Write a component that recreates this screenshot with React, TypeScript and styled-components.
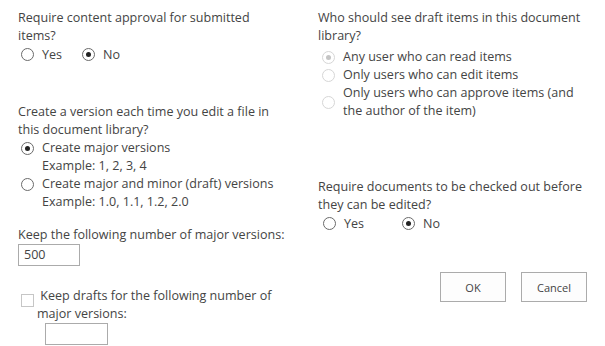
import React from "react";
import styled, { createGlobalStyle } from "styled-components";

const GlobalStyle = createGlobalStyle`
  html, body {
    margin: 0;
    padding: 0;
    background: #ffffff;
  }
  body {
    font-family: "Open Sans", "Noto Sans", "Liberation Sans", sans-serif;
    font-size: 12.55px;
    color: #444444;
  }
`;

const Page = styled.div`
  width: 605px;
  height: 346px;
  box-sizing: border-box;
  padding: 9px 18px 0 18px;
  display: grid;
  grid-template-columns: 300px 1fr;
  overflow: hidden;
`;

const Column = styled.div`
  display: flex;
  flex-direction: column;
`;

const Section = styled.div<{ $top?: number }>`
  display: flex;
  flex-direction: column;
  margin-top: ${(p) => p.$top ?? 0}px;
`;

const Label = styled.div`
  line-height: 18px;
  white-space: nowrap;
`;

const RadioRow = styled.div<{ $gap: number; $indent: number }>`
  display: flex;
  align-items: center;
  gap: ${(p) => p.$gap}px;
  height: 19px;
  padding-left: ${(p) => p.$indent}px;
`;

const Option = styled.label<{ $center?: boolean }>`
  display: flex;
  align-items: ${(p) => (p.$center ? "center" : "flex-start")};
  gap: 8px;
  line-height: 18px;
  white-space: nowrap;
`;

const OptionList = styled.div<{ $indent: number; $top?: number }>`
  display: flex;
  flex-direction: column;
  padding-left: ${(p) => p.$indent}px;
  margin-top: ${(p) => p.$top ?? 0}px;
`;

const Circle = styled.span<{ $checked?: boolean; $disabled?: boolean; $center?: boolean }>`
  position: relative;
  flex: none;
  width: 11px;
  height: 11px;
  margin-top: ${(p) => (p.$center ? 0 : 3)}px;
  border-radius: 50%;
  border: 1px solid ${(p) => (p.$disabled ? "#d6d6d6" : "#6a6a6a")};
  background: #fff;
  &::after {
    content: "";
    display: ${(p) => (p.$checked ? "block" : "none")};
    position: absolute;
    left: 3px;
    top: 3px;
    width: 5px;
    height: 5px;
    border-radius: 50%;
    background: ${(p) => (p.$disabled ? "#c4c4c4" : "#222")};
  }
`;

const OptionText = styled.div`
  display: flex;
  flex-direction: column;
`;

const TextBox = styled.div<{ $width: number; $left?: number }>`
  box-sizing: border-box;
  width: ${(p) => p.$width}px;
  height: 22px;
  margin-left: ${(p) => p.$left ?? 0}px;
  border: 1px solid #ababab;
  padding: 0 5px;
  line-height: 20px;
  background: #fff;
`;

const CheckRow = styled.div`
  display: grid;
  grid-template-columns: 16px 1fr;
  margin-top: 21px;
  padding-left: 3px;
`;

const Checkbox = styled.span`
  box-sizing: border-box;
  width: 13px;
  height: 13px;
  border: 1px solid #c6c6c6;
  background: #fff;
  margin-top: 7px;
`;

const Buttons = styled.div`
  display: flex;
  justify-content: flex-end;
  gap: 15px;
  margin-top: 39px;
`;

const Button = styled.button`
  box-sizing: border-box;
  width: 66px;
  height: 30px;
  border: 1px solid #ababab;
  background: #fdfdfd;
  font: inherit;
  color: #444444;
  font-size: 11px;
`;

const Radio = ({
  label,
  checked,
  disabled,
  center,
}: {
  label: React.ReactNode;
  checked?: boolean;
  disabled?: boolean;
  center?: boolean;
}) => (
  <Option $center={center}>
    <Circle $checked={checked} $disabled={disabled} $center={center} />
    <OptionText>{label}</OptionText>
  </Option>
);

export default function App() {
  return (
    <>
      <GlobalStyle />
      <Page>
        <Column>
          <Section>
            <Label>
              Require content approval for submitted
              <br />
              items?
            </Label>
            <RadioRow $gap={20} $indent={3}>
              <Radio center label="Yes" />
              <Radio center label="No" checked />
            </RadioRow>
          </Section>

          <Section $top={39}>
            <Label>
              Create a version each time you edit a file in
              <br />
              this document library?
            </Label>
            <OptionList $indent={3}>
              <Radio
                checked
                label={
                  <>
                    <span>Create major versions</span>
                    <span>Example: 1, 2, 3, 4</span>
                  </>
                }
              />
              <Radio
                label={
                  <>
                    <span>Create major and minor (draft) versions</span>
                    <span>Example: 1.0, 1.1, 1.2, 2.0</span>
                  </>
                }
              />
            </OptionList>
          </Section>

          <Section $top={15}>
            <Label>Keep the following number of major versions:</Label>
            <TextBox $width={62}>500</TextBox>
          </Section>

          <CheckRow>
            <Checkbox />
            <Section>
              <Label>
                &nbsp;Keep drafts for the following number of
                <br />
                major versions:
              </Label>
              <TextBox $width={63} $left={8} />
            </Section>
          </CheckRow>
        </Column>

        <Column>
          <Section>
            <Label>
              Who should see draft items in this document
              <br />
              library?
            </Label>
            <OptionList $indent={4} $top={3}>
              <Radio center label="Any user who can read items" checked disabled />
              <Radio center label="Only users who can edit items" disabled />
              <Radio
                center
                disabled
                label={
                  <>
                    <span>Only users who can approve items (and</span>
                    <span>the author of the item)</span>
                  </>
                }
              />
            </OptionList>
          </Section>

          <Section $top={58}>
            <Label>
              Require documents to be checked out before
              <br />
              they can be edited?
            </Label>
            <RadioRow $gap={38} $indent={5}>
              <Radio center label="Yes" />
              <Radio center label="No" checked />
            </RadioRow>
          </Section>

          <Buttons>
            <Button>OK</Button>
            <Button>Cancel</Button>
          </Buttons>
        </Column>
      </Page>
    </>
  );
}
